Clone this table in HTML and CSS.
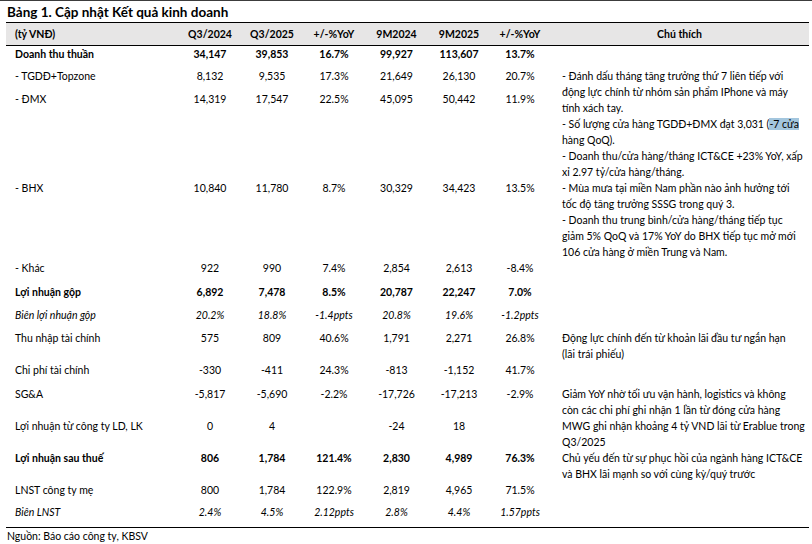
FILE: index.html
```html
<!DOCTYPE html>
<html lang="vi">
<head>
<meta charset="utf-8">
<title>Bảng 1. Cập nhật Kết quả kinh doanh</title>
<link rel="stylesheet" href="styles.css">
</head>
<body>
<div class="page">
  <h1 class="title">Bảng 1. Cập nhật Kết quả kinh doanh</h1>
  <div class="table">
    <div class="head">
      <div class="lbl">(tỷ VNĐ)</div>
      <div class="num">Q3/2024</div>
      <div class="num">Q3/2025</div>
      <div class="num">+/-%YoY</div>
      <div class="num">9M2024</div>
      <div class="num">9M2025</div>
      <div class="num">+/-%YoY</div>
      <div class="num">Chú thích</div>
    </div>
    <div class="body">
      <div class="row bold">
        <div class="lbl">Doanh thu thuần</div>
        <div class="num">34,147</div><div class="num">39,853</div><div class="num">16.7%</div>
        <div class="num">99,927</div><div class="num">113,607</div><div class="num">13.7%</div>
        <div class="note"></div>
      </div>
      <div class="row">
        <div class="lbl">- TGDĐ+Topzone</div>
        <div class="num">8,132</div><div class="num">9,535</div><div class="num">17.3%</div>
        <div class="num">21,649</div><div class="num">26,130</div><div class="num">20.7%</div>
        <div class="note span2">- Đánh dấu tháng tăng trưởng thứ 7 liên tiếp với<br>động lực chính từ nhóm sản phẩm IPhone và máy<br>tính xách tay.<br>- Số lượng cửa hàng TGDĐ+ĐMX đạt 3,031 (<span class="sel">-7 cửa</span><br>hàng QoQ).<br>- Doanh thu/cửa hàng/tháng ICT&amp;CE +23% YoY, xấp<br>xỉ 2.97 tỷ/cửa hàng/tháng.</div>
      </div>
      <div class="row">
        <div class="lbl">- ĐMX</div>
        <div class="num">14,319</div><div class="num">17,547</div><div class="num">22.5%</div>
        <div class="num">45,095</div><div class="num">50,442</div><div class="num">11.9%</div>
      </div>
      <div class="row">
        <div class="lbl">- BHX</div>
        <div class="num">10,840</div><div class="num">11,780</div><div class="num">8.7%</div>
        <div class="num">30,329</div><div class="num">34,423</div><div class="num">13.5%</div>
        <div class="note">- Mùa mưa tại miền Nam phần nào ảnh hưởng tới<br>tốc độ tăng trưởng SSSG trong quý 3.<br>- Doanh thu trung bình/cửa hàng/tháng tiếp tục<br>giảm 5% QoQ và 17% YoY do BHX tiếp tục mở mới<br>106 cửa hàng ở miền Trung và Nam.</div>
      </div>
      <div class="row">
        <div class="lbl">- Khác</div>
        <div class="num">922</div><div class="num">990</div><div class="num">7.4%</div>
        <div class="num">2,854</div><div class="num">2,613</div><div class="num">-8.4%</div>
        <div class="note"></div>
      </div>
      <div class="row bold">
        <div class="lbl">Lợi nhuận gộp</div>
        <div class="num">6,892</div><div class="num">7,478</div><div class="num">8.5%</div>
        <div class="num">20,787</div><div class="num">22,247</div><div class="num">7.0%</div>
        <div class="note"></div>
      </div>
      <div class="row ital">
        <div class="lbl">Biên lợi nhuận gộp</div>
        <div class="num">20.2%</div><div class="num">18.8%</div><div class="num">-1.4ppts</div>
        <div class="num">20.8%</div><div class="num">19.6%</div><div class="num">-1.2ppts</div>
        <div class="note"></div>
      </div>
      <div class="row">
        <div class="lbl">Thu nhập tài chính</div>
        <div class="num">575</div><div class="num">809</div><div class="num">40.6%</div>
        <div class="num">1,791</div><div class="num">2,271</div><div class="num">26.8%</div>
        <div class="note">Động lực chính đến từ khoản lãi đầu tư ngắn hạn<br>(lãi trái phiếu)</div>
      </div>
      <div class="row">
        <div class="lbl">Chi phí tài chính</div>
        <div class="num">-330</div><div class="num">-411</div><div class="num">24.3%</div>
        <div class="num">-813</div><div class="num">-1,152</div><div class="num">41.7%</div>
        <div class="note"></div>
      </div>
      <div class="row">
        <div class="lbl">SG&amp;A</div>
        <div class="num">-5,817</div><div class="num">-5,690</div><div class="num">-2.2%</div>
        <div class="num">-17,726</div><div class="num">-17,213</div><div class="num">-2.9%</div>
        <div class="note">Giảm YoY nhờ tối ưu vận hành, logistics và không<br>còn các chi phí ghi nhận 1 lần từ đóng cửa hàng</div>
      </div>
      <div class="row">
        <div class="lbl">Lợi nhuận từ công ty LD, LK</div>
        <div class="num">0</div><div class="num">4</div><div class="num"></div>
        <div class="num">-24</div><div class="num">18</div><div class="num"></div>
        <div class="note">MWG ghi nhận khoảng 4 tỷ VND lãi từ Erablue trong<br>Q3/2025</div>
      </div>
      <div class="row bold">
        <div class="lbl">Lợi nhuận sau thuế</div>
        <div class="num">806</div><div class="num">1,784</div><div class="num">121.4%</div>
        <div class="num">2,830</div><div class="num">4,989</div><div class="num">76.3%</div>
        <div class="note regular">Chủ yếu đến từ sự phục hồi của ngành hàng ICT&amp;CE<br>và BHX lãi mạnh so với cùng kỳ/quý trước</div>
      </div>
      <div class="row">
        <div class="lbl">LNST công ty mẹ</div>
        <div class="num">800</div><div class="num">1,784</div><div class="num">122.9%</div>
        <div class="num">2,819</div><div class="num">4,965</div><div class="num">71.5%</div>
        <div class="note"></div>
      </div>
      <div class="row ital">
        <div class="lbl">Biên LNST</div>
        <div class="num">2.4%</div><div class="num">4.5%</div><div class="num">2.12ppts</div>
        <div class="num">2.8%</div><div class="num">4.4%</div><div class="num">1.57ppts</div>
        <div class="note"></div>
      </div>
    </div>
  </div>
  <p class="source">Nguồn: Báo cáo công ty, KBSV</p>
</div>
</body>
</html>
```

FILE: styles.css
```css
* { box-sizing: border-box; }

html, body {
  margin: 0;
  padding: 0;
  background: #ffffff;
}

body {
  font-family: "Lato", "Liberation Sans", sans-serif;
  font-size: 10.5px;
  color: #000000;
}

.page {
  border-top: 1px solid #3c3c3c;
  height: 544px;
  overflow: hidden;
}

.title {
  margin: 0;
  padding: 3px 0 0 7px;
  height: 21px;
  font-size: 13.5px;
  line-height: 16px;
  font-weight: 700;
}

.table {
  margin: 0 3px 0 6px;
  border-top: 1px solid #000000;
  border-bottom: 1px solid #000000;
}

.head,
.body {
  display: grid;
  grid-template-columns: 173px 62px 62px 62px 63px 62px 60px 1fr;
}

.head {
  height: 23px;
  line-height: 22px;
  background: #e7e6e6;
  border-bottom: 1px solid #000000;
  font-weight: 700;
}

.body {
  grid-template-rows: 22px 23px 89px 80px 24px 23px 23px 32px 24px 32px 32px 32px 22px 23px;
  line-height: 16px;
}

.row { display: contents; }
.row.bold { font-weight: 700; }
.row.ital { font-style: italic; }

.lbl {
  padding-left: 9px;
  white-space: nowrap;
}

.num {
  text-align: center;
  white-space: nowrap;
}

.note {
  padding-left: 12px;
  white-space: nowrap;
}

.note.regular { font-weight: 400; }

.span2 { grid-row: span 2; }

.sel { background: #a3c6de; }

.source {
  margin: 0;
  padding-left: 7px;
  line-height: 16px;
}
```
